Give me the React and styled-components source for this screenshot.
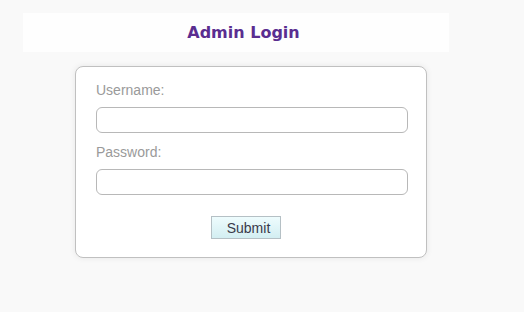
import React from 'react';
import styled, { createGlobalStyle } from 'styled-components';

const GlobalStyle = createGlobalStyle`
  html, body {
    margin: 0;
    padding: 0;
    background: #f9f9f9;
  }
  body {
    font-family: "Liberation Sans", Arial, sans-serif;
  }
`;

const Page = styled.div`
  width: 524px;
  height: 312px;
  display: flex;
  flex-direction: column;
  padding-top: 13px;
  box-sizing: border-box;
`;

const Header = styled.div`
  margin-left: 23px;
  width: 426px;
  height: 39px;
  box-sizing: border-box;
  padding-left: 15px;
  background: #fefefe;
  display: flex;
  align-items: center;
  justify-content: center;
`;

const Title = styled.h1`
  margin: 0;
  font-family: "DejaVu Sans", Verdana, sans-serif;
  font-size: 16px;
  font-weight: bold;
  color: #5a2d90;
`;

const Card = styled.form`
  margin: 14px 0 0 75px;
  width: 352px;
  height: 192px;
  box-sizing: border-box;
  background: #fff;
  border: 1px solid #c0c0c0;
  border-radius: 8px;
  box-shadow: 0 0 6px rgba(0, 0, 0, 0.08);
  padding: 15px 19px 0 20px;
  display: flex;
  flex-direction: column;
`;

const Label = styled.label`
  font-size: 14px;
  color: #9a9a9a;
  line-height: 16px;
  margin-bottom: 9px;
`;

const Input = styled.input`
  width: 312px;
  height: 26px;
  box-sizing: border-box;
  border: 1px solid #b8b8b8;
  border-radius: 6px;
  background: #fff;
  outline: none;
  margin-bottom: ${(p) => p.$gap}px;
`;

const ButtonRow = styled.div`
  display: flex;
  justify-content: center;
  padding-right: 12px;
  margin-top: 21px;
`;

const Submit = styled.button`
  width: 70px;
  height: 23px;
  box-sizing: border-box;
  border: 1px solid #b5c0c5;
  background: linear-gradient(to bottom, #eefcfd, #d3eef2);
  font-family: "Liberation Sans", Arial, sans-serif;
  font-size: 14px;
  color: #3a3a4a;
  padding: 0 0 0 6px;
`;

export default function App() {
  return (
    <>
      <GlobalStyle />
      <Page>
        <Header>
          <Title>Admin Login</Title>
        </Header>
        <Card onSubmit={(e) => e.preventDefault()}>
          <Label>Username:</Label>
          <Input type="text" $gap={11} />
          <Label>Password:</Label>
          <Input type="password" $gap={0} />
          <ButtonRow>
            <Submit type="submit">Submit</Submit>
          </ButtonRow>
        </Card>
      </Page>
    </>
  );
}
